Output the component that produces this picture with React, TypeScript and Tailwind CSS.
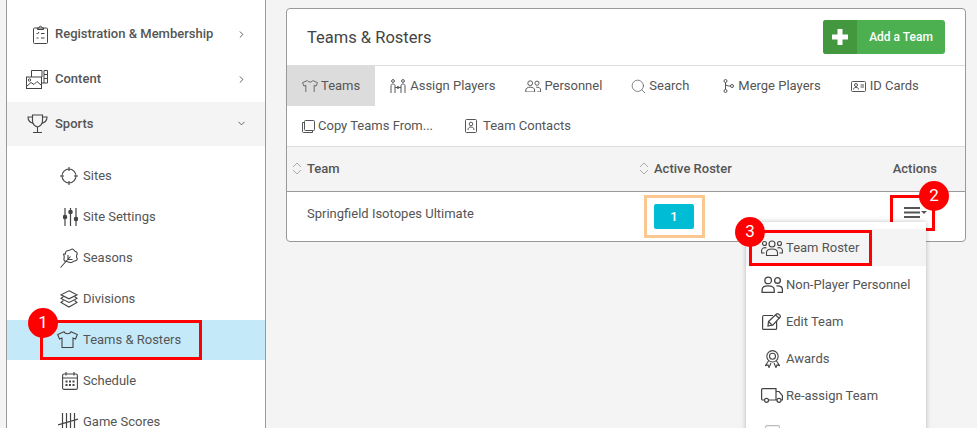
import type { FC, ReactNode } from 'react';
import { ChevronDown, ChevronRight, Search } from 'lucide-react';

const ClipboardIcon = () => (
  <svg width="15" height="19" viewBox="0 0 15 19" fill="none" stroke="currentColor" strokeWidth="1">
    <rect x="0.500" y="3" width="14" height="15.500" rx="1" />
    <path d="M4.500 4.500V3h1.500c0-2.500 3-2.500 3 0h1.500v1.500z" />
    <path d="M3.500 8l1 1 1.500-2M8 8.500h3.500M3.500 13h2M8 13h3.500" />
  </svg>
);

const ContentIcon = () => (
  <svg width="22" height="19" viewBox="0 0 22 19" fill="none" stroke="currentColor" strokeWidth="1">
    <path d="M5.500 7V.5h10.500v6.500M18 .5h3.500v12.500H18zM18 4.500h3.500M18 8.500h3.500M16 13h2" />
    <rect x="0.500" y="7" width="15" height="11.500" fill="white" />
    <circle cx="3.500" cy="10" r="1.200" />
    <path d="M1 16l4-3.500 3 2 3-3 4 3.500" />
  </svg>
);

const TrophyIcon = () => (
  <svg width="21" height="19" viewBox="0 0 21 19" fill="none" stroke="currentColor" strokeWidth="1.100">
    <path d="M5.500 1h10v6c0 3-2 5-5 6-3-1-5-3-5-6z" />
    <path d="M5.500 3H1c0 3 1.500 5.500 5.500 6.500M15.500 3H20c0 3-1.500 5.500-5.500 6.500M10.500 13v5M6 18.500h9" />
  </svg>
);

const SitesIcon = () => (
  <svg width="18" height="18" viewBox="0 0 18 18" fill="none" stroke="currentColor" strokeWidth="1.100">
    <circle cx="9" cy="9" r="7" />
    <path d="M9 0v4M9 14v4M0 9h4M14 9h4" />
    <path d="M7 9h.01M11 9h.01M9 7h.01M9 11h.01" />
  </svg>
);

const SlidersIcon = () => (
  <svg width="15" height="18" viewBox="0 0 15 18" fill="none" stroke="currentColor" strokeWidth="1.200">
    <path d="M2 0v7M2 11v7M7.500 0v2M7.500 6v12M13 0v9M13 13v5" />
    <circle cx="2" cy="9" r="1.700" fill="currentColor" />
    <circle cx="7.500" cy="4" r="1.700" fill="currentColor" />
    <circle cx="13" cy="11" r="1.700" fill="currentColor" />
  </svg>
);

const LeafIcon = () => (
  <svg width="18" height="20" viewBox="0 0 18 20" fill="none" stroke="currentColor" strokeWidth="1.100">
    <path d="M.5 19.500l10-11M5.500 6c-.5-2 1-3.500 3-3.500S11 .8 12.500 1s1.500 2 3 2.500 2 1.500 1.500 3-1 2 0 3.500-1 3-2.500 3-1.500 1.500-3.500 1.500-3-1-4.500-1-3-1-2.500-3 .5-2-.2-3.500S3.500 6 5.500 6z" />
    <path d="M8 11.500h4.500M8 11.500V7" />
  </svg>
);

const LayersIcon = () => (
  <svg width="18" height="18" viewBox="0 0 18 18" fill="none" stroke="currentColor" strokeWidth="1.100">
    <path d="M9 .8l8 4-8 4-8-4z" />
    <path d="M3.500 6.500L1 8.500l8 4 8-4-2.500-2" />
    <path d="M3.500 10.500L1 12.500l8 4.500 8-4.500-2.500-2" />
  </svg>
);

const ShirtIcon = ({ w = 21 }: { w?: number }) => (
  <svg width={w} height={(w * 17) / 21} viewBox="0 0 21 17" fill="none" stroke="currentColor" strokeWidth="1.100">
    <path d="M7 .8L.7 3.500l1.800 4.500 2.500-1v9.500h11V7l2.500 1 1.800-4.500L14 .8c-1 2.600-6 2.600-7 0z" />
  </svg>
);

const CalendarIcon = () => (
  <svg width="16" height="18" viewBox="0 0 16 18" fill="none" stroke="currentColor" strokeWidth="1.100">
    <rect x="0.600" y="2" width="14.800" height="15.400" rx="1.500" />
    <path d="M.6 6h14.800M4 0v3.500M12 0v3.500" />
    <path
      d="M3.500 8.500h2v2h-2zM7 8.500h2v2H7zM10.500 8.500h2v2h-2zM3.500 12h2v2h-2zM7 12h2v2H7zM10.500 12h2v2h-2z"
      fill="currentColor"
      stroke="none"
    />
  </svg>
);

const TallyIcon = () => (
  <svg width="20" height="17" viewBox="0 0 20 17" fill="none" stroke="currentColor" strokeWidth="1.200">
    <path d="M4.500 0v17M8.500 0v17M12.500 0v17M16.500 0v17M0 12l20-6" />
  </svg>
);

const AssignIcon = () => (
  <svg width="16" height="15" viewBox="0 0 16 15" fill="none" stroke="currentColor" strokeWidth="1">
    <circle cx="3" cy="2" r="1.400" />
    <circle cx="13" cy="2" r="1.400" />
    <path d="M1 14V6.500c0-1 1-1.500 2-1.500s2 .5 2 1.500V14M11 14V6.500c0-1 1-1.500 2-1.500s2 .5 2 1.500V14M5 8.500h6" />
    <circle cx="8" cy="8.500" r="1" />
  </svg>
);

const PersonnelIcon = ({ size = 16 }: { size?: number }) => (
  <svg width={size} height={size * 0.8} viewBox="0 0 20 16" fill="none" stroke="currentColor" strokeWidth="1.200">
    <circle cx="6.500" cy="4" r="3" />
    <circle cx="15" cy="4" r="2.600" />
    <path d="M1 15v-2.500C1 10.500 3 9 6.500 9s5.500 1.500 5.500 3.500V15zM14 9c3.500-.3 5.500 1 5.500 3.500V15H15" />
  </svg>
);

const RosterIcon = () => (
  <svg width="22" height="16" viewBox="0 0 22 16" fill="none" stroke="currentColor" strokeWidth="1.100">
    <circle cx="11" cy="4" r="3" />
    <circle cx="3.500" cy="3.500" r="2" />
    <circle cx="18.500" cy="3.500" r="2" />
    <path d="M5.500 15.500v-3c0-2 2-3.500 5.500-3.500s5.500 1.500 5.500 3.500v3z" />
    <path d="M5.500 8C3 7 .6 8.500.6 10.500V13h3M16.500 8c2.500-1 4.900.5 4.900 2.500V13h-3" />
  </svg>
);

const MergeIcon = () => (
  <svg width="11" height="14" viewBox="0 0 11 14" fill="none" stroke="currentColor" strokeWidth="1">
    <circle cx="2.500" cy="2" r="1.500" />
    <circle cx="2.500" cy="12" r="1.500" />
    <circle cx="9" cy="7" r="1.500" />
    <path d="M2.500 3.500v7M2.500 5c0 1.500 2 2 5 2" />
  </svg>
);

const IdCardIcon = () => (
  <svg width="15" height="11" viewBox="0 0 15 11" fill="none" stroke="currentColor" strokeWidth="1">
    <rect x="0.500" y="0.500" width="14" height="10" rx="1" />
    <circle cx="5" cy="4" r="1.500" />
    <path d="M2.500 8.500c0-1.500 1-2 2.500-2s2.500.5 2.500 2M9.500 4h3.500M9.500 6h3.500" />
  </svg>
);

const CopyIcon = () => (
  <svg width="13" height="13" viewBox="0 0 13 13" fill="none" stroke="currentColor" strokeWidth="1">
    <rect x="2.500" y="0.500" width="10" height="10" rx="1" />
    <path d="M2.500 2.500H.5v9c0 .6.400 1 1 1h9v-2" />
  </svg>
);

const ContactsIcon = () => (
  <svg width="12" height="14" viewBox="0 0 12 14" fill="none" stroke="currentColor" strokeWidth="1">
    <rect x="0.500" y="0.500" width="11" height="13" rx="1" />
    <circle cx="6" cy="5" r="1.800" />
    <path d="M3 11c0-2 1.200-3 3-3s3 1 3 3" />
  </svg>
);

const EditIcon = () => (
  <svg width="20" height="17" viewBox="0 0 20 17" fill="none" stroke="currentColor" strokeWidth="1.200">
    <path d="M11 2.500H2c-.8 0-1.400.6-1.400 1.400v11.500c0 .6.400 1 1 1h12c.6 0 1-.4 1-1V8" />
    <path d="M6.500 8.500L14.500 1c1-1 4.500 1.500 3.800 3L11 12l-5 1z" />
    <path d="M6.500 8.500L10.500 12.500M13.500 2l4 3.500" />
  </svg>
);

const AwardIcon = () => (
  <svg width="15" height="18" viewBox="0 0 15 18" fill="none" stroke="currentColor" strokeWidth="1.100">
    <circle cx="7.500" cy="6.300" r="5.700" />
    <circle cx="7.500" cy="6.300" r="3" />
    <path d="M3.500 11l-3 4.500 2.500-.5 1 2.500 2-4.500M11.500 11l3 4.500-2.500-.5-1 2.500-2-4.500" />
  </svg>
);

const TruckIcon = () => (
  <svg width="22" height="15" viewBox="0 0 22 15" fill="none" stroke="currentColor" strokeWidth="1.200">
    <path d="M3 12H1.500c-.5 0-.9-.4-.9-.9V1.500c0-.5.4-.9.900-.9H15v11.400H8M15 3.500h3l3.400 4v4.500h-1.400M15 12h1" />
    <circle cx="5.500" cy="12.300" r="2" />
    <circle cx="18" cy="12.300" r="2" />
  </svg>
);

const BlankDocIcon = () => (
  <svg width="15" height="15" viewBox="0 0 15 15" fill="none" stroke="#bbb" strokeWidth="1.100">
    <rect x="0.600" y="0.600" width="13.800" height="13.800" rx="1.500" />
  </svg>
);

const SortIcon = () => (
  <svg width="10" height="13" viewBox="0 0 10 13" fill="none" stroke="#aaa" strokeWidth="1">
    <path d="M1 5l4-4 4 4M1 8l4 4 4-4" />
  </svg>
);

const Marker = ({ n, className }: { n: number; className: string }) => (
  <div
    className={`absolute z-20 flex h-[30px] w-[30px] items-center justify-center rounded-full bg-[#f00] text-[17px] text-white ${className}`}
  >
    {n}
  </div>
);

const MainItem = ({ icon, label, open, active }: { icon: ReactNode; label: string; open?: boolean; active?: boolean }) => (
  <div className={`flex items-center pb-[1px] pr-[18px] ${active ? 'h-[44px] bg-[#f4f4f4]' : 'h-[45px]'}`}>
    <div className="flex w-[46px] shrink-0 justify-end pr-[5px] text-[#444]">{icon}</div>
    <span className="flex-1 pl-[2px] text-[13px] font-medium text-[#555]">{label}</span>
    {open ? <ChevronDown size={11} className="text-[#555]" /> : <ChevronRight size={11} className="text-[#555]" />}
  </div>
);

const SubItem = ({ icon, label, active }: { icon: ReactNode; label: string; active?: boolean }) => (
  <div className={`flex items-center ${active ? 'mt-[1px] h-[40px] bg-[#c4eafa] pb-[1px]' : 'h-[41px]'}`}>
    <div className="flex w-[72px] shrink-0 justify-end pr-[1px] text-[#444]">{icon}</div>
    <span className="pl-[4px] text-[13px] text-[#555]">{label}</span>
  </div>
);

const tabsA = [
  { label: 'Teams', icon: <ShirtIcon w={16} />, active: true, gap: 'gap-[3px]' },
  { label: 'Assign Players', icon: <AssignIcon />, gap: 'gap-[4px]' },
  { label: 'Personnel', icon: <PersonnelIcon />, gap: 'gap-[3px]' },
  { label: 'Search', icon: <Search size={17} strokeWidth={1} className="-mx-[2px]" />, gap: 'gap-[4px]' },
  {
    label: 'Merge Players',
    icon: (
      <div className="flex w-[16px] justify-end pr-[1px]">
        <MergeIcon />
      </div>
    ),
    gap: 'gap-[3px]',
  },
  { label: 'ID Cards', icon: <IdCardIcon />, gap: 'gap-[4px]' },
];

const tabsB = [
  { label: 'Copy Teams From...', icon: <CopyIcon />, gap: 'gap-[3px]' },
  {
    label: 'Team Contacts',
    icon: (
      <div className="flex w-[16px] justify-center">
        <ContactsIcon />
      </div>
    ),
    gap: 'gap-[4px]',
  },
];

const Tab = ({ label, icon, active, gap }: { label: string; icon: ReactNode; active?: boolean; gap: string }) => (
  <div className={`flex h-[40px] items-center px-[15px] text-[13px] text-[#555] ${gap} ${active ? 'bg-[#dcdcdc]' : ''}`}>
    {icon}
    <span>{label}</span>
  </div>
);

const menu = [
  { label: 'Team Roster', icon: <RosterIcon />, active: true },
  { label: 'Non-Player Personnel', icon: <PersonnelIcon size={22} /> },
  { label: 'Edit Team', icon: <EditIcon /> },
  { label: 'Awards', icon: <AwardIcon /> },
  { label: 'Re-assign Team', icon: <TruckIcon /> },
  { label: '', icon: <BlankDocIcon /> },
];

const App: FC = () => {
  return (
    <div className="relative flex h-[428px] w-[977px] overflow-hidden bg-[#f4f4f4] font-['Roboto',sans-serif]">
      <aside className="ml-[6px] h-full w-[260px] shrink-0 border-x border-[#999] bg-white pt-[12px]">
        <MainItem icon={<ClipboardIcon />} label="Registration & Membership" />
        <MainItem icon={<ContentIcon />} label="Content" />
        <MainItem icon={<TrophyIcon />} label="Sports" open active />
        <div className="pt-[9px]">
          <SubItem icon={<SitesIcon />} label="Sites" />
          <SubItem icon={<SlidersIcon />} label="Site Settings" />
          <SubItem icon={<LeafIcon />} label="Seasons" />
          <SubItem icon={<LayersIcon />} label="Divisions" />
          <SubItem icon={<ShirtIcon />} label="Teams & Rosters" active />
          <SubItem icon={<CalendarIcon />} label="Schedule" />
          <SubItem icon={<TallyIcon />} label="Game Scores" />
        </div>
      </aside>

      <main className="flex-1 pl-[20px] pr-[11px] pt-[8px]">
        <div className="rounded-[4px] border border-[#999] bg-white">
          <div className="flex h-[57px] items-center justify-between border-b border-[#ddd] px-[20px]">
            <h1 className="pt-[3px] text-[16.500px] text-[#444]">Teams &amp; Rosters</h1>
            <div className="flex h-[34px] w-[122px] overflow-hidden rounded-[3px] bg-[#4caf50] text-white">
              <div className="flex w-[34px] items-center justify-center bg-[#43983f] text-[#fff]">
                <svg width="16" height="16" viewBox="0 0 16 16" fill="currentColor">
                  <path d="M5.500 0h5v5.500H16v5h-5.500V16h-5v-5.500H0v-5h5.500z" />
                </svg>
              </div>
              <span className="flex flex-1 items-center justify-center text-[12px] font-medium">Add a Team</span>
            </div>
          </div>

          <div className="flex">
            {tabsA.map(tab => (
              <Tab key={tab.label} {...tab} />
            ))}
          </div>
          <div className="flex border-b border-[#ddd]">
            {tabsB.map(tab => (
              <Tab key={tab.label} {...tab} />
            ))}
          </div>

          <div className="flex h-[45px] items-center border-b border-[#999] bg-[#f4f4f4] pb-[1px] text-[13px] font-medium text-[#555]">
            <div className="flex w-[352px] items-center gap-[5px] pl-[5px]">
              <SortIcon />
              <span>Team</span>
            </div>
            <div className="flex flex-1 items-center gap-[5px]">
              <SortIcon />
              <span>Active Roster</span>
            </div>
            <span className="pr-[28px]">Actions</span>
          </div>

          <div className="flex h-[49px] items-center text-[13px] text-[#555]">
            <div className="w-[367px] pb-[5px] pl-[20px]">Springfield Isotopes Ultimate</div>
            <div className="flex h-[25px] w-[40px] items-center justify-center rounded-[2px] bg-[#00bcd4] text-[13px] font-medium text-white">
              1
            </div>
            <div className="ml-auto flex items-center gap-[1px] pb-[8px] pr-[38px] text-[#555]">
              <svg width="16" height="11" viewBox="0 0 16 11" fill="currentColor">
                <path d="M0 0h16v2H0zM0 4.500h16v2H0zM0 9h16v2H0z" />
              </svg>
              <svg width="6" height="3" viewBox="0 0 6 3" fill="currentColor">
                <path d="M0 0h6L3 3z" />
              </svg>
            </div>
          </div>
        </div>
      </main>

      <div className="absolute left-[746px] top-[222px] z-10 w-[180px] bg-white pt-[7px] shadow-[0_0_5px_rgba(0,0,0,0.25)]">
        {menu.map(item => (
          <div
            key={item.label}
            className={`flex h-[37px] items-center text-[13px] text-[#555] ${item.active ? 'bg-[#f4f4f4]' : ''}`}
          >
            <div className="flex w-[40px] shrink-0 justify-center pl-[12px] text-[#444]">{item.icon}</div>
            <span>{item.label}</span>
          </div>
        ))}
      </div>

      <div className="absolute left-[644px] top-[195px] h-[43px] w-[61px] border-[3px] border-[#fbc892]" />
      <div className="absolute left-[40px] top-[320px] h-[40px] w-[162px] border-[3px] border-[#f00]" />
      <div className="absolute left-[890px] top-[195px] h-[36px] w-[45px] border-[3px] border-[#f00]" />
      <div className="absolute left-[749px] top-[230px] z-10 h-[36px] w-[123px] border-[3px] border-[#f00]" />
      <Marker n={1} className="left-[28px] top-[308px]" />
      <Marker n={2} className="left-[919px] top-[181px]" />
      <Marker n={3} className="left-[735px] top-[217px]" />
    </div>
  );
};

export default App;
